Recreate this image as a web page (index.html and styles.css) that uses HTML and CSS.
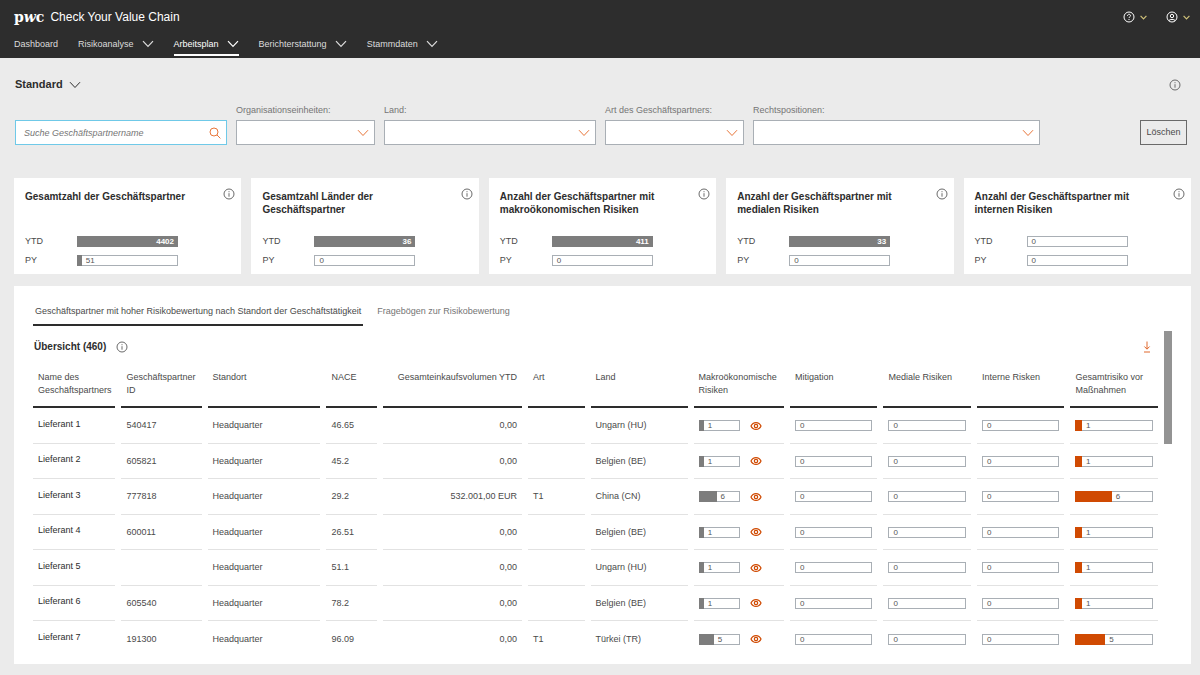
FILE: index.html
```html
<!DOCTYPE html>
<html lang="de">
<head>
  <meta charset="utf-8" />
  <title>Check Your Value Chain</title>
  <meta name="viewport" content="width=device-width, initial-scale=1" />
  <link rel="stylesheet" href="styles.css">
</head>
<body>
  <!-- ICONS -->
  <svg class="sprite" aria-hidden="true">
    <symbol id="chevron" viewBox="0 0 12 8"><path d="M1 1.2l5 5.3 5-5.3" /></symbol>
    <symbol id="info" viewBox="0 0 12 12"><circle cx="6" cy="6" r="5" /><path d="M6 5.2v3.5M6 3.2v1" /></symbol>
    <symbol id="eye" viewBox="0 0 12 12"><path d="M1 6C3 1.400 9 1.400 11 6 9 10.600 3 10.600 1 6z" /><circle cx="6" cy="6" r="1.700" /></symbol>
    <symbol id="search" viewBox="0 0 12 12"><circle cx="5" cy="5" r="4" /><path d="M8 8l3.400 3.400" /></symbol>
    <symbol id="download" viewBox="0 0 12 12"><path d="M6 .5v7.500M3.400 5.500L6 8.200l2.600-2.700M3 11h6" /></symbol>
    <symbol id="help" viewBox="0 0 12 12"><circle cx="6" cy="6" r="5" /><path d="M4.500 4.800c0-2 3-2 3-.1 0 1.100-1.500 1.100-1.500 2.300M6 8v1" /></symbol>
    <symbol id="user" viewBox="0 0 12 12"><circle cx="6" cy="6" r="5" /><circle cx="6" cy="5" r="1.700" /><path d="M2.800 9.600c1.200-1.600 5.200-1.600 6.400 0" /></symbol>
  </svg>

  <!-- HEADER -->
  <header class="header">
    <div class="brand">
      <span class="logo">p<i>w</i>c</span>
      <span class="app-name">Check Your Value Chain</span>
      <div class="tools">
        <button class="tool" aria-label="Hilfe"><svg class="icon"><use href="#help" /></svg><svg class="chevron-small"><use href="#chevron" /></svg></button>
        <button class="tool" aria-label="Profil"><svg class="icon"><use href="#user" /></svg><svg class="chevron-small"><use href="#chevron" /></svg></button>
      </div>
    </div>
    <nav class="nav">
      <a href="#">Dashboard</a>
      <a href="#">Risikoanalyse <svg class="chevron"><use href="#chevron" /></svg></a>
      <a href="#" class="active">Arbeitsplan <svg class="chevron"><use href="#chevron" /></svg></a>
      <a href="#">Berichterstattung <svg class="chevron"><use href="#chevron" /></svg></a>
      <a href="#">Stammdaten <svg class="chevron"><use href="#chevron" /></svg></a>
    </nav>
  </header>

  <main>
    <!-- FILTERS -->
    <section class="filter-bar">
      <div class="view-row">
        <button class="view">Standard <svg class="chevron"><use href="#chevron" /></svg></button>
        <button class="info" aria-label="Info"><svg class="icon"><use href="#info" /></svg></button>
      </div>
      <div class="filter-row">
        <div class="filters">
          <div class="field search">
            <input type="search" aria-label="Suche Geschäftspartnername" placeholder="Suche Geschäftspartnername">
            <svg class="icon"><use href="#search" /></svg>
          </div>
          <div class="field">
            <label for="units">Organisationseinheiten:</label>
            <select id="units"><option></option></select>
            <svg class="chevron"><use href="#chevron" /></svg>
          </div>
          <div class="field">
            <label for="country">Land:</label>
            <select id="country"><option></option></select>
            <svg class="chevron"><use href="#chevron" /></svg>
          </div>
          <div class="field">
            <label for="kind">Art des Geschäftspartners:</label>
            <select id="kind"><option></option></select>
            <svg class="chevron"><use href="#chevron" /></svg>
          </div>
          <div class="field">
            <label for="rights">Rechtspositionen:</label>
            <select id="rights"><option></option></select>
            <svg class="chevron"><use href="#chevron" /></svg>
          </div>
        </div>
        <button class="clear">Löschen</button>
      </div>
    </section>

    <!-- KPI CARDS -->
    <section class="cards">
      <article class="card">
        <div class="card-head"><h2>Gesamtzahl der Geschäftspartner</h2><button class="info" aria-label="Info"><svg class="icon"><use href="#info" /></svg></button></div>
        <div class="kpi"><span>YTD</span><div class="bar full">4402</div></div>
        <div class="kpi"><span>PY</span><div class="bar"><i class="fill" style="width: 5%"></i>51</div></div>
      </article>
      <article class="card">
        <div class="card-head"><h2>Gesamtzahl Länder der Geschäftspartner</h2><button class="info" aria-label="Info"><svg class="icon"><use href="#info" /></svg></button></div>
        <div class="kpi"><span>YTD</span><div class="bar full">36</div></div>
        <div class="kpi"><span>PY</span><div class="bar">0</div></div>
      </article>
      <article class="card">
        <div class="card-head"><h2>Anzahl der Geschäftspartner mit makroökonomischen Risiken</h2><button class="info" aria-label="Info"><svg class="icon"><use href="#info" /></svg></button></div>
        <div class="kpi"><span>YTD</span><div class="bar full">411</div></div>
        <div class="kpi"><span>PY</span><div class="bar">0</div></div>
      </article>
      <article class="card">
        <div class="card-head"><h2>Anzahl der Geschäftspartner mit medialen Risiken</h2><button class="info" aria-label="Info"><svg class="icon"><use href="#info" /></svg></button></div>
        <div class="kpi"><span>YTD</span><div class="bar full">33</div></div>
        <div class="kpi"><span>PY</span><div class="bar">0</div></div>
      </article>
      <article class="card">
        <div class="card-head"><h2>Anzahl der Geschäftspartner mit internen Risiken</h2><button class="info" aria-label="Info"><svg class="icon"><use href="#info" /></svg></button></div>
        <div class="kpi"><span>YTD</span><div class="bar">0</div></div>
        <div class="kpi"><span>PY</span><div class="bar">0</div></div>
      </article>
    </section>

    <!-- SUPPLIER TABLE -->
    <section class="panel">
      <div class="tabs">
        <button class="tab active">Geschäftspartner mit hoher Risikobewertung nach Standort der Geschäftstätigkeit</button>
        <button class="tab">Fragebögen zur Risikobewertung</button>
      </div>
      <div class="panel-body">
        <div class="overview">
          <div class="overview-head">
            <h2>Übersicht (460)</h2>
            <button class="info" aria-label="Info"><svg class="icon"><use href="#info" /></svg></button>
            <button class="download" aria-label="Herunterladen"><svg class="icon"><use href="#download" /></svg></button>
          </div>
          <table>
            <colgroup>
              <col class="c-name"><col class="c-id"><col class="c-site"><col class="c-nace"><col class="c-volume"><col class="c-kind"><col class="c-country"><col class="c-macro"><col class="c-bar"><col class="c-bar"><col class="c-bar"><col class="c-total">
            </colgroup>
            <thead>
              <tr>
                <th>Name des Geschäftspartners</th>
                <th>Geschäftspartner ID</th>
                <th>Standort</th>
                <th>NACE</th>
                <th class="num">Gesamteinkaufsvolumen YTD</th>
                <th>Art</th>
                <th>Land</th>
                <th>Makroökonomische Risiken</th>
                <th>Mitigation</th>
                <th>Mediale Risiken</th>
                <th>Interne Risken</th>
                <th>Gesamtrisiko vor Maßnahmen</th>
              </tr>
            </thead>
            <tbody>
              <tr>
                <td class="name">Lieferant 1</td><td>540417</td><td>Headquarter</td><td>46.65</td><td class="num">0,00</td><td></td><td>Ungarn (HU)</td>
                <td><div class="macro"><div class="bar"><i class="fill" style="width: 14%"></i>1</div><button class="eye" aria-label="Details"><svg class="icon"><use href="#eye" /></svg></button></div></td>
                <td><div class="bar">0</div></td><td><div class="bar">0</div></td><td><div class="bar">0</div></td>
                <td><div class="bar risk"><i class="fill" style="width: 9%"></i>1</div></td>
              </tr>
              <tr>
                <td class="name">Lieferant 2</td><td>605821</td><td>Headquarter</td><td>45.2</td><td class="num">0,00</td><td></td><td>Belgien (BE)</td>
                <td><div class="macro"><div class="bar"><i class="fill" style="width: 14%"></i>1</div><button class="eye" aria-label="Details"><svg class="icon"><use href="#eye" /></svg></button></div></td>
                <td><div class="bar">0</div></td><td><div class="bar">0</div></td><td><div class="bar">0</div></td>
                <td><div class="bar risk"><i class="fill" style="width: 9%"></i>1</div></td>
              </tr>
              <tr>
                <td class="name">Lieferant 3</td><td>777818</td><td>Headquarter</td><td>29.2</td><td class="num">532.001,00 EUR</td><td>T1</td><td>China (CN)</td>
                <td><div class="macro"><div class="bar"><i class="fill" style="width: 50%"></i>6</div><button class="eye" aria-label="Details"><svg class="icon"><use href="#eye" /></svg></button></div></td>
                <td><div class="bar">0</div></td><td><div class="bar">0</div></td><td><div class="bar">0</div></td>
                <td><div class="bar risk"><i class="fill" style="width: 50%"></i>6</div></td>
              </tr>
              <tr>
                <td class="name">Lieferant 4</td><td>600011</td><td>Headquarter</td><td>26.51</td><td class="num">0,00</td><td></td><td>Belgien (BE)</td>
                <td><div class="macro"><div class="bar"><i class="fill" style="width: 14%"></i>1</div><button class="eye" aria-label="Details"><svg class="icon"><use href="#eye" /></svg></button></div></td>
                <td><div class="bar">0</div></td><td><div class="bar">0</div></td><td><div class="bar">0</div></td>
                <td><div class="bar risk"><i class="fill" style="width: 9%"></i>1</div></td>
              </tr>
              <tr>
                <td class="name">Lieferant 5</td><td></td><td>Headquarter</td><td>51.1</td><td class="num">0,00</td><td></td><td>Ungarn (HU)</td>
                <td><div class="macro"><div class="bar"><i class="fill" style="width: 14%"></i>1</div><button class="eye" aria-label="Details"><svg class="icon"><use href="#eye" /></svg></button></div></td>
                <td><div class="bar">0</div></td><td><div class="bar">0</div></td><td><div class="bar">0</div></td>
                <td><div class="bar risk"><i class="fill" style="width: 9%"></i>1</div></td>
              </tr>
              <tr>
                <td class="name">Lieferant 6</td><td>605540</td><td>Headquarter</td><td>78.2</td><td class="num">0,00</td><td></td><td>Belgien (BE)</td>
                <td><div class="macro"><div class="bar"><i class="fill" style="width: 14%"></i>1</div><button class="eye" aria-label="Details"><svg class="icon"><use href="#eye" /></svg></button></div></td>
                <td><div class="bar">0</div></td><td><div class="bar">0</div></td><td><div class="bar">0</div></td>
                <td><div class="bar risk"><i class="fill" style="width: 9%"></i>1</div></td>
              </tr>
              <tr>
                <td class="name">Lieferant 7</td><td>191300</td><td>Headquarter</td><td>96.09</td><td class="num">0,00</td><td>T1</td><td>Türkei (TR)</td>
                <td><div class="macro"><div class="bar"><i class="fill" style="width: 42%"></i>5</div><button class="eye" aria-label="Details"><svg class="icon"><use href="#eye" /></svg></button></div></td>
                <td><div class="bar">0</div></td><td><div class="bar">0</div></td><td><div class="bar">0</div></td>
                <td><div class="bar risk"><i class="fill" style="width: 41%"></i>5</div></td>
              </tr>
            </tbody>
          </table>
        </div>
        <div class="scroll-track"><div class="scroll-thumb"></div></div>
      </div>
    </section>
  </main>
</body>
</html>
```

FILE: styles.css
```css
/* ========== GLOBAL ========== */
* {
  box-sizing: border-box;
  margin: 0;
  padding: 0;
}
body {
  background: #ebebeb;
  color: #4a4a4a;
  font-family: "Liberation Sans", Arial, sans-serif;
  font-size: 9px;
  line-height: 13px;
}
button,
input,
select {
  font: inherit;
  color: inherit;
  background: none;
  border: none;
  border-radius: 0;
}
button {
  cursor: pointer;
}
h2 {
  color: #2d2d2d;
  font-size: 10px;
  line-height: 13px;
}
svg {
  display: block;
  flex: none;
  fill: none;
  stroke: currentColor;
}
.sprite {
  position: absolute;
  width: 0;
  height: 0;
}
.icon {
  width: 12px;
  height: 12px;
}
.chevron {
  width: 12px;
  height: 8px;
}
.chevron-small {
  width: 7px;
  height: 5px;
  color: #d0c27a;
  stroke-width: 2;
}
.info {
  color: #6a6a6a;
}

/* ========== HEADER ========== */
.header {
  height: 58px;
  padding: 6px 10px 0 14px;
  background: #2d2d2d;
  color: #fff;
}
.brand {
  display: flex;
  align-items: center;
  height: 22px;
}
.logo {
  font-family: "DejaVu Serif", serif;
  font-size: 14px;
  font-weight: bold;
  line-height: 20px;
}
.app-name {
  margin-left: 6px;
  font-size: 12px;
}
.tools {
  display: flex;
  gap: 19px;
  margin-left: auto;
}
.tool {
  display: flex;
  align-items: center;
  gap: 5px;
}
.nav {
  display: flex;
  gap: 20px;
  height: 28px;
}
.nav a {
  display: flex;
  align-items: center;
  gap: 8px;
  padding-top: 6px;
  border-bottom: 2px solid transparent;
  color: #dcdcdc;
  text-decoration: none;
}
.nav a.active {
  border-color: #fff;
  color: #fff;
}
.nav .chevron {
  stroke-width: 1.2;
}

/* ========== FILTERS ========== */
main {
  padding: 20px 9px 10px 14px;
}
.filter-bar {
  padding: 0 4px 0 1px;
}
.view-row {
  display: flex;
  align-items: center;
  justify-content: space-between;
  padding-right: 6px;
}
.view {
  display: flex;
  align-items: center;
  gap: 6px;
  color: #2d2d2d;
  font-size: 11px;
  font-weight: bold;
}
.filter-row {
  display: flex;
  align-items: flex-end;
  gap: 100px;
  margin-top: 13px;
}
.filters {
  flex: 1;
  display: grid;
  grid-template-columns: 212fr 139fr 212fr 139fr 287fr;
  gap: 9px;
  align-items: end;
}
.field {
  position: relative;
}
.field label {
  display: block;
  margin-bottom: 3px;
  color: #757575;
}
.field select,
.field input {
  display: block;
  width: 100%;
  height: 25px;
  border: 1px solid #a9afb5;
  background: #fff;
  appearance: none;
}
.field input {
  padding: 0 24px 0 8px;
  border-color: #6fc9e8;
}
.field input::placeholder {
  color: #757575;
  font-style: italic;
  opacity: 1;
}
.field svg {
  position: absolute;
  right: 6px;
  bottom: 8px;
  color: #e8763a;
  pointer-events: none;
}
.field .icon {
  bottom: 6px;
}
.clear {
  width: 47px;
  height: 25px;
  border: 1px solid #6a6a6a;
}

/* ========== KPI CARDS ========== */
.cards {
  display: grid;
  grid-template-columns: repeat(5, 1fr);
  gap: 10px;
  margin-top: 33px;
}
.card {
  padding: 10px 6px 7px 11px;
  background: #fff;
}
.card-head {
  display: flex;
  align-items: flex-start;
  justify-content: space-between;
  height: 47px;
}
.card h2 {
  max-width: 170px;
  padding-top: 2px;
}
.kpi {
  display: flex;
  align-items: center;
  height: 13px;
}
.kpi + .kpi {
  margin-top: 6px;
}
.kpi span {
  width: 52px;
}
.kpi .bar {
  width: 101px;
}

/* ========== BARS ========== */
.bar {
  display: flex;
  height: 11px;
  padding-right: 3px;
  border: 1px solid #a9afb5;
  background: #fff;
  color: #555;
  font-size: 8px;
  line-height: 10px;
  text-indent: 4px;
}
.bar .fill {
  flex: none;
  height: 11px;
  margin: -1px 0 0 -1px;
  background: #7d7d7d;
}
.bar.risk .fill {
  background: #d04a02;
}
.bar.full {
  justify-content: flex-end;
  border-color: #7d7d7d;
  background: #7d7d7d;
  color: #fff;
  font-weight: bold;
}

/* ========== TABLE PANEL ========== */
.panel {
  margin-top: 12px;
  padding: 12px 19px 7px;
  background: #fff;
}
.tabs {
  display: flex;
  gap: 12px;
}
.tab {
  padding: 7px 2px 6px;
  border-bottom: 2px solid transparent;
  color: #757575;
}
.tab.active {
  border-color: #2d2d2d;
  color: #4a4a4a;
}
.panel-body {
  display: flex;
  gap: 6px;
  padding-top: 5px;
}
.overview {
  flex: 1;
}
.overview-head {
  display: flex;
  align-items: center;
  gap: 10px;
  height: 31px;
  padding: 0 5px 0 1px;
}
.download {
  margin-left: auto;
  color: #e0682c;
}
table {
  width: calc(100% + 12px);
  margin: 0 -6px;
  border-collapse: separate;
  border-spacing: 6px 0;
  table-layout: fixed;
}
.c-name { width: 7.3%; }
.c-id { width: 7.1%; }
.c-site { width: 10%; }
.c-nace { width: 4.5%; }
.c-volume { width: 12.3%; }
.c-kind { width: 5%; }
.c-country { width: 8.6%; }
.c-macro { width: 8%; }
.c-bar { width: 7.75%; }
.c-total { width: 7.75%; }
th {
  height: 46px;
  padding: 9px 0 0 5px;
  border-bottom: 2px solid #2d2d2d;
  font-weight: normal;
  text-align: left;
  vertical-align: top;
}
td {
  height: 36px;
  padding: 0 5px;
  border-bottom: 1px solid #e2e2e2;
}
tr:nth-child(even) td {
  height: 35px;
}
tr:last-child td {
  border-bottom: none;
}
th.num,
td.num {
  padding-right: 5px;
  text-align: right;
}
td.name {
  padding-bottom: 3px;
  color: #2d2d2d;
}
.macro {
  display: flex;
  align-items: center;
  gap: 10px;
}
.macro .bar {
  width: 41px;
}
.eye {
  color: #d04a02;
  stroke-width: 1.2;
}
.scroll-track {
  width: 8px;
}
.scroll-thumb {
  height: 113px;
  background: #939393;
}
```
